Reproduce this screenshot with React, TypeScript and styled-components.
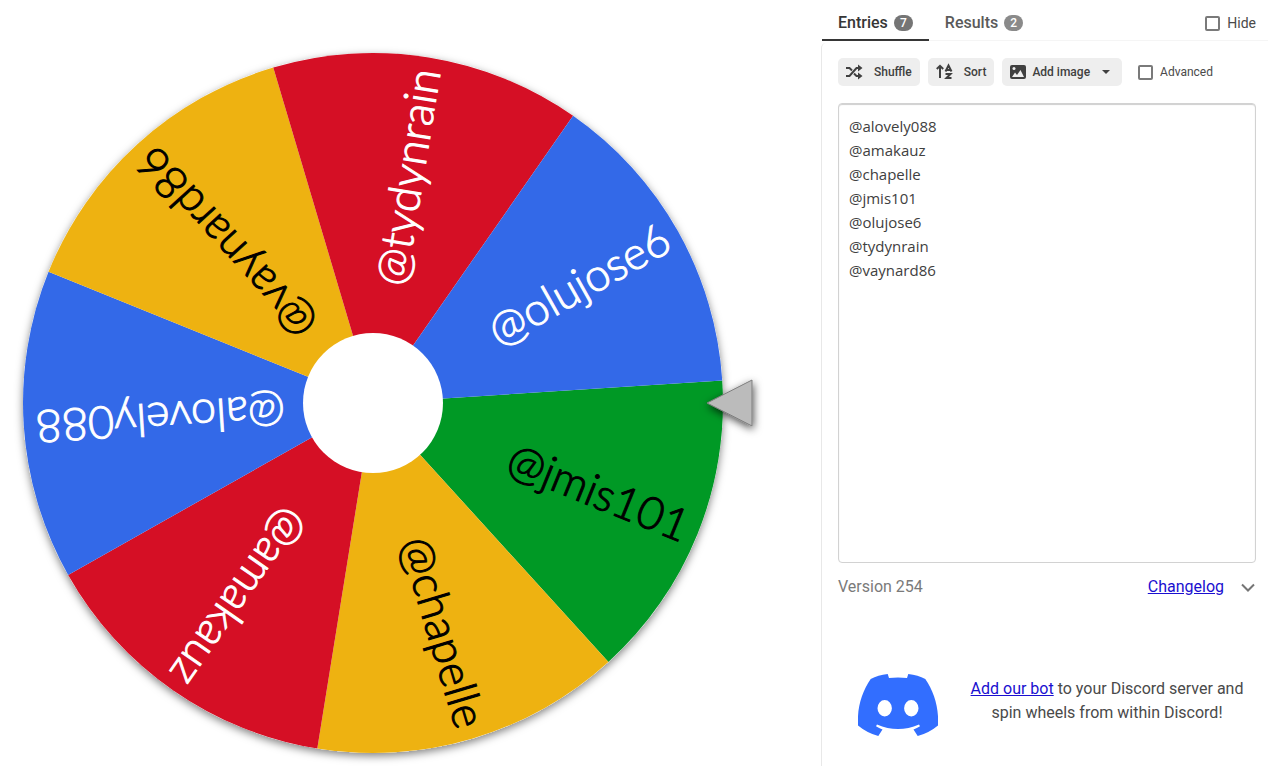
import React from 'react';
import styled, { createGlobalStyle } from 'styled-components';

const GlobalStyle = createGlobalStyle`
  *, *::before, *::after { box-sizing: border-box; }
  html { overflow: hidden; }
  body {
    margin: 0;
    background: #fff;
    color: #4a4a4a;
    font-family: Roboto, "Liberation Sans", sans-serif;
    font-size: 16px;
    line-height: 24px;
  }
`;

const Page = styled.main`
  display: grid;
  grid-template-columns: minmax(0, 1fr) 451px;
  min-height: 100vh;
`;

const WheelArea = styled.section`
  display: flex;
  align-items: center;
  justify-content: center;
`;

const WheelDrawing = styled.svg`
  display: block;
  width: 100%;
  height: auto;
  max-height: 100vh;
`;

const SliceLabel = styled.text`
  font-family: Lato, sans-serif;
  font-weight: 300;
  font-size: 45px;
  stroke-width: 1px;
`;

const SidePanel = styled.aside`
  display: flex;
  flex-direction: column;
`;

const TabBar = styled.nav`
  display: flex;
  align-items: stretch;
  height: 41px;
  margin-right: 4px;
  padding-left: 1px;
`;

const Tab = styled.button<{ $active?: boolean }>`
  display: flex;
  align-items: center;
  gap: 6px;
  height: 41px;
  padding: 6px 16px 0;
  border: 0;
  border-bottom: 2px solid ${(p) => (p.$active ? '#363636' : 'transparent')};
  background: none;
  color: ${(p) => (p.$active ? '#363636' : '#5a5a5a')};
  font: 500 16px/24px Roboto, sans-serif;
`;

const TabRest = styled.div`
  display: flex;
  flex: 1;
  align-items: stretch;
  justify-content: space-between;
  padding-right: 12px;
  border-bottom: 1px solid #f5f5f5;
`;

const Count = styled.span<{ $dim?: boolean }>`
  min-width: 19px;
  height: 16px;
  border-radius: 8px;
  background: ${(p) => (p.$dim ? '#8a8a8a' : '#757575')};
  color: #fff;
  font-size: 12px;
  line-height: 16px;
  text-align: center;
`;

const Check = styled.label<{ $size: number }>`
  display: flex;
  align-items: center;
  gap: 7px;
  font-size: ${(p) => p.$size}px;
`;

const HideSlot = styled.div`
  display: flex;
  padding-top: 6px;
`;

const Box = styled.input`
  appearance: none;
  width: 15px;
  height: 15px;
  margin: 0;
  border: 2px solid #7a7a7a;
  border-radius: 2px;
  background: #fff;
`;

const PanelBody = styled.div`
  display: flex;
  flex: 1;
  flex-direction: column;
  margin-top: 2px;
  padding: 15px 16px 24px;
  border-left: 1px solid #e8e8e8;
  border-top-left-radius: 5px;
`;

const Toolbar = styled.div`
  display: flex;
  align-items: center;
  gap: 8px;
`;

const ToolButton = styled.button<{ $gap: number }>`
  display: flex;
  align-items: center;
  gap: ${(p) => p.$gap}px;
  height: 28px;
  padding: 0 8px;
  border: 0;
  border-radius: 5px;
  background: #eee;
  color: #404040;
  font: 500 12px/18px Roboto, sans-serif;
`;

const Caret = styled.span`
  margin: 0 4px 0 6px;
  border: 4px solid transparent;
  border-top-color: #404040;
  border-bottom: 0;
`;

const AdvancedSlot = styled.div`
  padding-left: 8px;
`;

const EntryBox = styled.textarea`
  display: block;
  width: 100%;
  height: 460px;
  margin-top: 17px;
  padding: 10px;
  border: 1px solid #d2d2d2;
  border-radius: 4px;
  box-shadow: inset 0 1px 1px #cfcfcf;
  background: #fff;
  color: #404040;
  font: 400 15px/24px "Open Sans", "Noto Sans", sans-serif;
  resize: none;
  outline: 0;
`;

const VersionRow = styled.div`
  display: flex;
  align-items: center;
  justify-content: space-between;
  margin-top: 12px;
  color: #7a7a7a;
`;

const VersionLinks = styled.div`
  display: flex;
  align-items: center;
  gap: 16px;
`;

const IconButton = styled.button`
  display: flex;
  padding: 2px 0 0;
  border: 0;
  background: none;
  color: #757575;
`;

const Link = styled.a`
  color: #1a0fd0;
`;

const Promo = styled.section`
  display: flex;
  align-items: flex-start;
  gap: 20px;
  margin-top: 75px;
  padding-left: 20px;
`;

const PromoText = styled.p`
  flex: 1;
  margin: 3px 0 0;
  text-align: center;
`;

const CENTER = 373;
const MIDDLE = 403;
const RADIUS = 350;
const STEP = 360 / 7;
const START = -3.7;

const slices = [
  { name: '@jmis101', fill: '#009925', ink: '#000' },
  { name: '@chapelle', fill: '#eeb211', ink: '#000' },
  { name: '@amakauz', fill: '#d50f25', ink: '#fff' },
  { name: '@alovely088', fill: '#3369e8', ink: '#fff' },
  { name: '@vaynard86', fill: '#eeb211', ink: '#000' },
  { name: '@tydynrain', fill: '#d50f25', ink: '#fff' },
  { name: '@olujose6', fill: '#3369e8', ink: '#fff' },
];

const entries = slices.map((s) => s.name).sort().join('\n');

const rim = (deg: number) => {
  const a = (deg * Math.PI) / 180;
  return `${RADIUS * Math.cos(a)} ${RADIUS * Math.sin(a)}`;
};

function Wheel() {
  return (
    <WheelDrawing viewBox="0 0 821 766" role="img" aria-label="Wheel of names">
      <defs>
        <filter id="wheelShadow" x="-10%" y="-10%" width="120%" height="120%">
          <feDropShadow dx="0" dy="3" stdDeviation="4" floodColor="#000" floodOpacity="0.5" />
        </filter>
        <filter id="pointerShadow" x="-40%" y="-40%" width="180%" height="180%">
          <feDropShadow dx="1" dy="3" stdDeviation="4" floodColor="#000" floodOpacity="0.7" />
        </filter>
      </defs>
      <g transform={`translate(${CENTER} ${MIDDLE})`}>
        <circle r={RADIUS} fill="#fff" filter="url(#wheelShadow)" />
        {slices.map((s, i) => {
          const from = START + i * STEP;
          return (
            <path key={s.name} fill={s.fill} d={`M0 0L${rim(from)}A${RADIUS} ${RADIUS} 0 0 1 ${rim(from + STEP)}Z`} />
          );
        })}
        {slices.map((s, i) => (
          <SliceLabel
            key={s.name}
            x={338}
            y={14}
            textAnchor="end"
            fill={s.ink}
            stroke={s.ink}
            transform={`rotate(${START + (i + 0.5) * STEP})`}
          >
            {s.name}
          </SliceLabel>
        ))}
        <circle r="70" fill="#fff" />
      </g>
      <path d="M707 403L752 380V426Z" fill="#bbb" stroke="#7d7d7d" filter="url(#pointerShadow)" />
    </WheelDrawing>
  );
}

const ShuffleIcon = () => (
  <svg width="18" height="16" viewBox="0 0 18 16" fill="none" stroke="currentColor" strokeWidth="2" aria-hidden="true">
    <path d="M0 4H3.500L6 6.500M8 9.500L10.500 12H13M0 12H3.500L10.500 4H13" />
    <path d="M12 .5L16.500 4L12 7.500ZM12 8.500L16.500 12L12 15.500Z" fill="currentColor" stroke="none" />
  </svg>
);

const SortIcon = () => (
  <svg width="18" height="18" viewBox="0 0 18 18" fill="none" stroke="currentColor" strokeWidth="2" aria-hidden="true">
    <path d="M4 15V3M.8 6L4 2.800L7.200 6" />
    <path d="M9.500 8.500L12.500 2.500L15.500 8.500M11 7H14" />
    <path d="M9.500 11H14.500L10.500 15H15.500" />
  </svg>
);

const ImageIcon = () => (
  <svg width="16" height="14" viewBox="0 0 16 14" aria-hidden="true">
    <rect width="16" height="14" rx="2" fill="currentColor" />
    <circle cx="4" cy="3.500" r="1.500" fill="#eee" />
    <path d="M2 12L5 7.500L7 10L10.500 5L14 12Z" fill="#eee" />
  </svg>
);

const DiscordIcon = () => (
  <svg width="80" height="62" viewBox="0 0 80 62" fill="#326eff" aria-hidden="true">
    <path d="M12.700 5Q20 1.200 29.700 0L31 4Q40 3 49 4L50.300 0Q60 1.200 67.300 5C76 18 81 33 80 51.500Q71 59 59.700 62L55.500 55.500Q59 54.300 62 52.200L61 50.500Q40 59.500 19 50.500L18 52.200Q21 54.300 24.500 55.500L20.300 62Q9 59 0 51.500C-1 33 4 18 12.700 5ZM26.700 26A7.200 8.200 0 1 0 26.700 42.400A7.200 8.200 0 1 0 26.700 26ZM53.300 26A7.200 8.200 0 1 0 53.300 42.400A7.200 8.200 0 1 0 53.300 26Z" />
  </svg>
);

export default function App() {
  return (
    <Page>
      <GlobalStyle />
      <WheelArea>
        <Wheel />
      </WheelArea>
      <SidePanel>
        <TabBar>
          <Tab type="button" $active>
            Entries <Count>7</Count>
          </Tab>
          <TabRest>
            <Tab type="button">
              Results <Count $dim>2</Count>
            </Tab>
            <HideSlot>
              <Check $size={14}>
                <Box type="checkbox" /> Hide
              </Check>
            </HideSlot>
          </TabRest>
        </TabBar>
        <PanelBody>
          <Toolbar>
            <ToolButton type="button" $gap={10}>
              <ShuffleIcon /> Shuffle
            </ToolButton>
            <ToolButton type="button" $gap={10}>
              <SortIcon /> Sort
            </ToolButton>
            <ToolButton type="button" $gap={6}>
              <ImageIcon /> Add image <Caret />
            </ToolButton>
            <AdvancedSlot>
              <Check $size={12}>
                <Box type="checkbox" /> Advanced
              </Check>
            </AdvancedSlot>
          </Toolbar>
          <EntryBox aria-label="Entries" defaultValue={entries} spellCheck={false} />
          <VersionRow>
            <span>Version 254</span>
            <VersionLinks>
              <Link href="#changelog">Changelog</Link>
              <IconButton type="button" aria-label="Expand">
                <svg width="16" height="10" viewBox="0 0 16 10" fill="none" stroke="currentColor" strokeWidth="2">
                  <path d="M2 1.500L8 7.500L14 1.500" />
                </svg>
              </IconButton>
            </VersionLinks>
          </VersionRow>
          <Promo>
            <DiscordIcon />
            <PromoText>
              <Link href="#bot">Add our bot</Link> to your Discord server and spin wheels from within Discord!
            </PromoText>
          </Promo>
        </PanelBody>
      </SidePanel>
    </Page>
  );
}
